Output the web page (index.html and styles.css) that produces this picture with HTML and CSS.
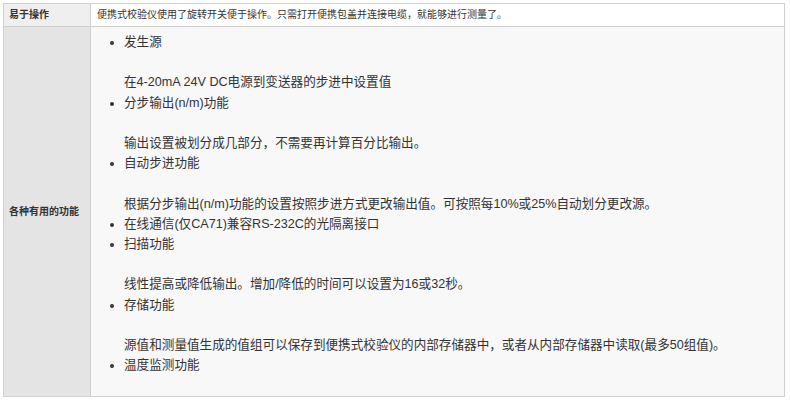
FILE: index.html
```html
<!DOCTYPE html>
<html lang="zh-CN">
<head>
    <meta charset="UTF-8">
    <meta name="viewport" content="width=device-width, initial-scale=1.0">
    <title>便携式校验仪</title>
    <link rel="stylesheet" href="styles.css">
</head>
<body>

    <table class="spec-table">
        <tr class="row-light">
            <th>易于操作</th>
            <td>便携式校验仪使用了旋转开关便于操作。只需打开便携包盖并连接电缆，就能够进行测量了。</td>
        </tr>
        <tr class="row-shade">
            <th>各种有用的功能</th>
            <td>
                <ul class="feature-list">
                    <li>发生源<br><br>在4-20mA 24V DC电源到变送器的步进中设置值</li>
                    <li>分步输出(n/m)功能<br><br>输出设置被划分成几部分，不需要再计算百分比输出。</li>
                    <li>自动步进功能<br><br>根据分步输出(n/m)功能的设置按照步进方式更改输出值。可按照每10%或25%自动划分更改源。</li>
                    <li>在线通信(仅CA71)兼容RS-232C的光隔离接口</li>
                    <li>扫描功能<br><br>线性提高或降低输出。增加/降低的时间可以设置为16或32秒。</li>
                    <li>存储功能<br><br>源值和测量值生成的值组可以保存到便携式校验仪的内部存储器中，或者从内部存储器中读取(最多50组值)。</li>
                    <li>温度监测功能</li>
                </ul>
            </td>
        </tr>
    </table>

</body>
</html>
```

FILE: styles.css
```css
body {
    margin: 3px;
    font-family: "Liberation Sans", "Noto Sans CJK SC", sans-serif;
    color: #333;
    background: #fff;
}
.spec-table {
    width: 782px;
    border-collapse: collapse;
}
.spec-table th,
.spec-table td {
    border: 1px solid #cfcfcf;
    font-size: 10px;
    line-height: 14px;
    text-align: left;
}
.spec-table th {
    width: 76px;
    padding: 4px 5px;
    font-weight: bold;
    vertical-align: middle;
}
.spec-table td {
    padding: 4px 6px;
}
.row-light th {
    background: #efefef;
}
.row-light td {
    background: #fff;
}
.row-shade th {
    background: #e4e4e4;
}
.row-shade td {
    background: #f8f8f8;
    padding-top: 5px;
    padding-bottom: 8px;
}
.feature-list {
    margin: 0 0 13px;
    padding-left: 27px;
    font-size: 12.6px;
    line-height: 20.2px;
}
```
